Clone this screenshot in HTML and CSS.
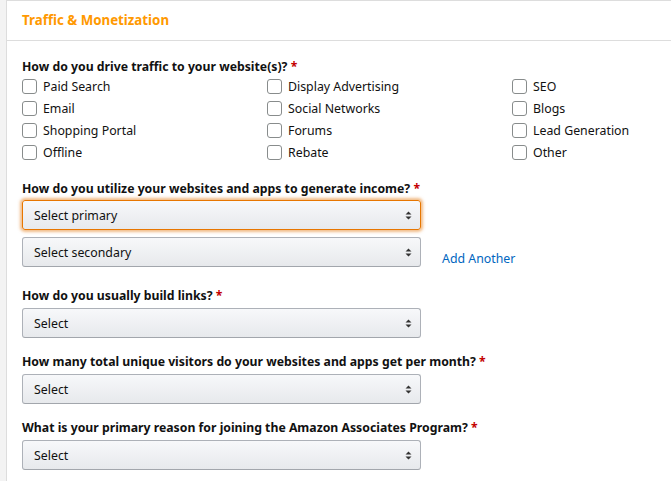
FILE: index.html
```html
<!DOCTYPE html>
<html>
<head>
<meta charset="utf-8">
<link rel="stylesheet" href="styles.css">
</head>
<body>
<div class="page">
  <div class="card">
    <div class="card-head">Traffic &amp; Monetization</div>
    <div class="card-body">
      <div class="field field-checks">
        <div class="label">How do you drive traffic to your website(s)? <span class="req">*</span></div>
        <div class="checks">
          <label class="check"><span class="box"></span>Paid Search</label>
          <label class="check"><span class="box"></span>Display Advertising</label>
          <label class="check"><span class="box"></span>SEO</label>
          <label class="check"><span class="box"></span>Email</label>
          <label class="check"><span class="box"></span>Social Networks</label>
          <label class="check"><span class="box"></span>Blogs</label>
          <label class="check"><span class="box"></span>Shopping Portal</label>
          <label class="check"><span class="box"></span>Forums</label>
          <label class="check"><span class="box"></span>Lead Generation</label>
          <label class="check"><span class="box"></span>Offline</label>
          <label class="check"><span class="box"></span>Rebate</label>
          <label class="check"><span class="box"></span>Other</label>
        </div>
      </div>
      <div class="field field-income">
        <div class="label">How do you utilize your websites and apps to generate income? <span class="req">*</span></div>
        <div class="select focus"><span>Select primary</span><svg class="arrows" width="7" height="9" viewBox="0 0 7 9"><path d="M0.5 3.5 L3.5 0.5 L6.5 3.5 Z M0.5 5.5 L3.5 8.5 L6.5 5.5 Z" fill="#333"/></svg></div>
        <div class="row">
          <div class="select"><span>Select secondary</span><svg class="arrows" width="7" height="9" viewBox="0 0 7 9"><path d="M0.5 3.5 L3.5 0.5 L6.5 3.5 Z M0.5 5.5 L3.5 8.5 L6.5 5.5 Z" fill="#333"/></svg></div>
          <a class="add">Add Another</a>
        </div>
      </div>
      <div class="field field-links">
        <div class="label">How do you usually build links? <span class="req">*</span></div>
        <div class="select"><span>Select</span><svg class="arrows" width="7" height="9" viewBox="0 0 7 9"><path d="M0.5 3.5 L3.5 0.5 L6.5 3.5 Z M0.5 5.5 L3.5 8.5 L6.5 5.5 Z" fill="#333"/></svg></div>
      </div>
      <div class="field">
        <div class="label">How many total unique visitors do your websites and apps get per month? <span class="req">*</span></div>
        <div class="select"><span>Select</span><svg class="arrows" width="7" height="9" viewBox="0 0 7 9"><path d="M0.5 3.5 L3.5 0.5 L6.5 3.5 Z M0.5 5.5 L3.5 8.5 L6.5 5.5 Z" fill="#333"/></svg></div>
      </div>
      <div class="field">
        <div class="label">What is your primary reason for joining the Amazon Associates Program? <span class="req">*</span></div>
        <div class="select"><span>Select</span><svg class="arrows" width="7" height="9" viewBox="0 0 7 9"><path d="M0.5 3.5 L3.5 0.5 L6.5 3.5 Z M0.5 5.5 L3.5 8.5 L6.5 5.5 Z" fill="#333"/></svg></div>
      </div>
    </div>
  </div>
</div>
</body>
</html>
```
FILE: styles.css
```css
html, body {
  margin: 0;
  padding: 0;
  background: #fff;
}
body {
  font-family: "Noto Sans", "Open Sans", Arial, sans-serif;
  font-size: 12.35px;
  color: #111;
}
.page {
  background: #f3f3f3;
  padding-left: 6px;
  height: 481px;
  overflow: hidden;
}
.card {
  background: #fff;
  border: 1px solid #ddd;
  border-right: none;
  height: 100%;
}
.card-head {
  height: 40px;
  box-sizing: border-box;
  padding: 9px 15px 0;
  font-size: 13.3px;
  font-weight: bold;
  color: #f90;
  border-bottom: 1px solid #ddd;
  line-height: 20px;
}
.card-body {
  padding: 17px 15px 0;
}
.field {
  margin-bottom: 15px;
}
.field-checks {
  margin-bottom: 17px;
}
.field-links {
  margin-bottom: 15px;
}
.label {
  font-weight: bold;
  font-size: 12.25px;
  line-height: 18px;
}
.req {
  color: #c40000;
}
.checks {
  display: grid;
  grid-template-columns: 245px 245px 1fr;
  margin-top: -1px;
}
.check {
  display: flex;
  align-items: center;
  height: 22px;
  color: #111;
}
.box {
  width: 13px;
  height: 13px;
  border: 1px solid #888c8c;
  border-radius: 3px;
  margin: 0 6px 0 0;
  background: #fff;
}
.select {
  width: 399px;
  height: 30px;
  box-sizing: border-box;
  border: 1px solid #adb1b8;
  border-bottom-color: #a2a6ac;
  border-radius: 3px;
  background: linear-gradient(#f7f8fa, #e7e9ec);
  display: flex;
  align-items: center;
  justify-content: space-between;
  padding: 0 8px 0 11px;
  margin-top: 3px;
}
.select.focus {
  border-color: #e77600;
  box-shadow: 0 0 3px 2px rgba(228, 121, 17, 0.5);
  margin-top: 2px;
}
.row {
  display: flex;
  align-items: flex-end;
  margin-top: 7px;
}
.row .select {
  margin-top: 0;
}
.field-income {
  margin-bottom: 20px;
}
.add {
  color: #0066c0;
  margin-left: 21px;
  line-height: 18px;
  margin-bottom: -1px;
}
```
